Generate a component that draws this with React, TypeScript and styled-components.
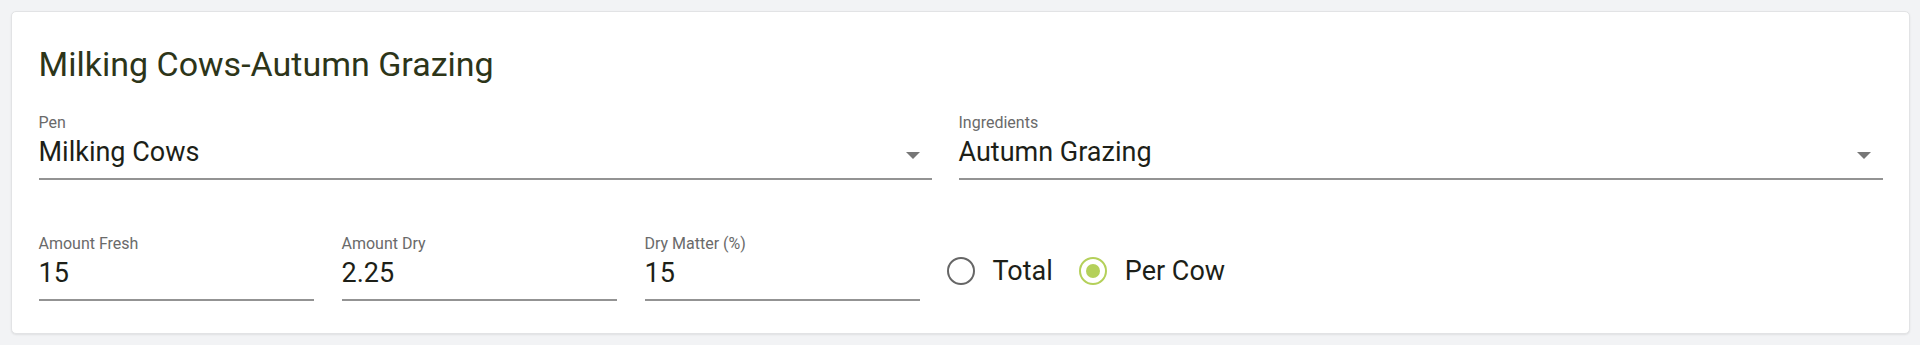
import React from "react";
import styled, { createGlobalStyle } from "styled-components";

const Global = createGlobalStyle`
  html, body { margin: 0; padding: 0; background: #f2f3f5; }
  body { font-family: Roboto, "Liberation Sans", Arial, sans-serif; }
  * { box-sizing: border-box; }
`;

const Page = styled.div`
  padding: 11px 10px 12px 11px;
`;

const Card = styled.section`
  background: #fff;
  border: 1px solid #e2e3e5;
  border-radius: 5px;
  box-shadow: 0 1px 2px rgba(0, 0, 0, 0.08);
  padding: 32px 26px 32px 26.5px;
`;

const Title = styled.h2`
  margin: 0;
  font-size: 34px;
  line-height: 40px;
  font-weight: 400;
  color: #2d3519;
`;

const TopRow = styled.div`
  display: grid;
  grid-template-columns: 893px 1fr;
  column-gap: 27px;
  margin-top: 28.5px;
`;

const BottomRow = styled.div`
  display: flex;
  align-items: center;
  gap: 27.5px;
  margin-top: 54.5px;
`;

const Field = styled.div<{ $width?: number }>`
  display: flex;
  flex-direction: column;
  ${(p) => (p.$width ? `width: ${p.$width}px; flex: none;` : "")}
  border-bottom: 2px solid #939393;
  padding-bottom: 10px;
`;

const Label = styled.div`
  font-size: 16px;
  line-height: 20px;
  color: #6a6a6a;
`;

const ValueRow = styled.div`
  display: flex;
  align-items: center;
  justify-content: space-between;
  margin-top: 3px;
`;

const Value = styled.div`
  font-size: 27px;
  line-height: 32px;
  color: #1d1f18;
`;

const Arrow = styled.span`
  width: 0;
  height: 0;
  border-left: 7px solid transparent;
  border-right: 7px solid transparent;
  border-top: 7px solid #777;
  margin-top: 8px;
  margin-right: 12px;
`;

const RadioGroup = styled.div`
  display: flex;
  align-items: center;
  gap: 26px;
  margin-left: -1px;
  margin-top: 6px;
`;

const RadioOption = styled.label`
  display: flex;
  align-items: center;
  gap: 18px;
  font-size: 27px;
  line-height: 32px;
  color: #1d1f18;
`;

const RadioCircle = styled.span<{ $checked?: boolean }>`
  width: 28px;
  height: 28px;
  border-radius: 50%;
  border: 2.5px solid ${(p) => (p.$checked ? "#b4d05a" : "#666")};
  display: flex;
  align-items: center;
  justify-content: center;
  &::after {
    content: "";
    display: ${(p) => (p.$checked ? "block" : "none")};
    width: 14px;
    height: 14px;
    border-radius: 50%;
    background: #b4d05a;
  }
`;

type FieldProps = { label: string; value: string; select?: boolean; width?: number };

const TextField = ({ label, value, select, width }: FieldProps) => (
  <Field $width={width}>
    <Label>{label}</Label>
    <ValueRow>
      <Value>{value}</Value>
      {select && <Arrow />}
    </ValueRow>
  </Field>
);

export default function App() {
  return (
    <>
      <Global />
      <Page>
        <Card>
          <Title>Milking Cows-Autumn Grazing</Title>
          <TopRow>
            <TextField label="Pen" value="Milking Cows" select />
            <TextField label="Ingredients" value="Autumn Grazing" select />
          </TopRow>
          <BottomRow>
            <TextField label="Amount Fresh" value="15" width={275.5} />
            <TextField label="Amount Dry" value="2.25" width={275.5} />
            <TextField label="Dry Matter (%)" value="15" width={275.5} />
            <RadioGroup>
              <RadioOption>
                <RadioCircle />
                Total
              </RadioOption>
              <RadioOption>
                <RadioCircle $checked />
                Per Cow
              </RadioOption>
            </RadioGroup>
          </BottomRow>
        </Card>
      </Page>
    </>
  );
}
